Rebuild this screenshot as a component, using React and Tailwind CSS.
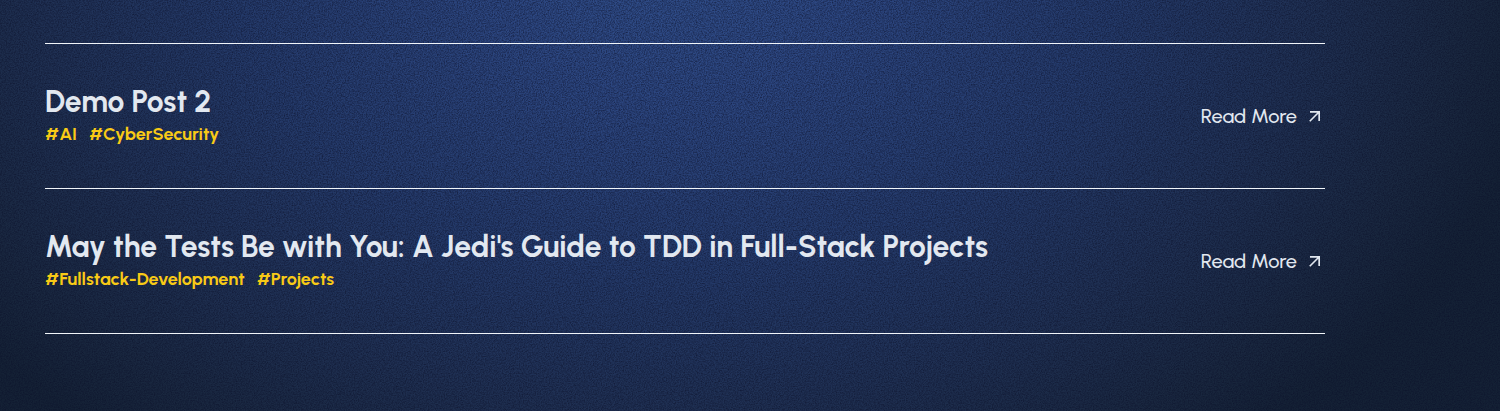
import { MdArrowOutward } from "react-icons/md";

const posts = [
  { title: "Demo Post 2", slug: "demo-post-2", tags: ["AI", "CyberSecurity"] },
  {
    title: "May the Tests Be with You: A Jedi's Guide to TDD in Full-Stack Projects",
    slug: "jedi-guide-to-tdd",
    tags: ["Fullstack-Development", "Projects"],
  },
];

function Grain() {
  return (
    <svg className="pointer-events-none absolute inset-0 size-full" aria-hidden="true">
      <filter id="grain" x="0" y="0" width="100%" height="100%" colorInterpolationFilters="sRGB">
        <feTurbulence type="fractalNoise" baseFrequency="0.77" numOctaves="4" stitchTiles="stitch" />
        <feColorMatrix values="0 0 0 0 0.04  0 0 0 0 0.06  0 0 0 0 0.16  1.1 0 0 0 -0.35" />
      </filter>
      <rect width="100%" height="100%" filter="url(#grain)" />
    </svg>
  );
}

function PostRow({ title, slug, tags }) {
  return (
    <li className="flex items-center justify-between gap-8 border-t border-slate-100 py-10 last:border-b">
      <div>
        <h3 className="text-3xl leading-9 font-bold text-slate-200">{title}</h3>
        <div className="flex gap-3 text-lg leading-7 font-bold text-[#f8ca16]">
          {tags.map((tag) => (
            <span key={tag}>#{tag}</span>
          ))}
        </div>
      </div>
      <a href={`/blog/${slug}`} className="flex shrink-0 items-center gap-2 text-xl leading-7 font-medium text-slate-200">
        Read More
        <MdArrowOutward className="size-5" aria-hidden="true" />
      </a>
    </li>
  );
}

export default function App() {
  return (
    <main className="relative min-h-screen bg-[#121d2e] bg-[radial-gradient(ellipse_880px_620px_at_45%_-40px,#304e8a_0%,#2c4680_22%,#243a6a_50%,#1f3053_72%,#19273f_90%,#142135_100%)] px-[45px] pt-[43px] font-['Urbanist','Lato',sans-serif]">
      <Grain />
      <ul className="relative max-w-7xl">
        {posts.map((post) => (
          <PostRow key={post.slug} {...post} />
        ))}
      </ul>
    </main>
  );
}
